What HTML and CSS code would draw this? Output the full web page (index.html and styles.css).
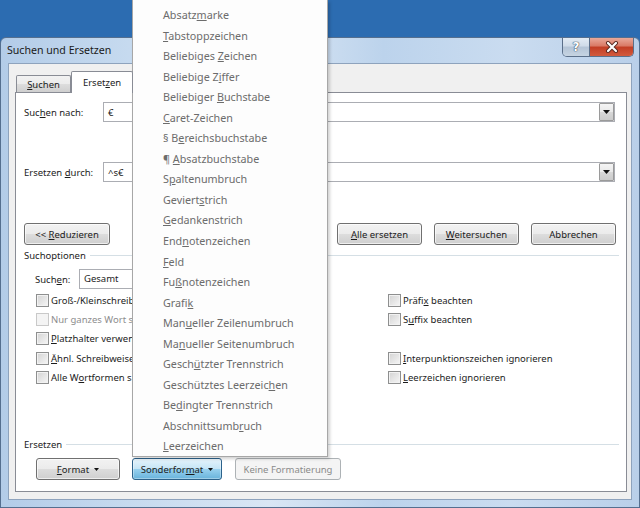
FILE: index.html
```html
<!DOCTYPE html>
<html lang="de">
<head>
<meta charset="utf-8">
<title>Suchen und Ersetzen</title>
<link rel="stylesheet" href="styles.css">
</head>
<body>
<div class="screen">
  <div class="window">
    <div class="titlebar">
      <span class="title">Suchen und Ersetzen</span>
      <div class="caption-buttons">
        <div class="cap-help"><span class="help-glyph">?</span></div>
        <div class="cap-close">
          <svg width="14" height="12" viewBox="0 0 14 12">
            <path d="M3 2 L11 10 M11 2 L3 10" stroke="#5a2a22" stroke-width="4" stroke-linecap="round"/>
            <path d="M3 2 L11 10 M11 2 L3 10" stroke="#ffffff" stroke-width="2.2" stroke-linecap="round"/>
          </svg>
        </div>
      </div>
    </div>
    <div class="client">
      <div class="tabs">
        <div class="tab"><u>S</u>uchen</div>
        <div class="tab active">Erset<u>z</u>en</div>
      </div>
      <div class="panel">
        <div class="field-row">
          <span class="field-label">Suc<u>h</u>en nach:</span>
          <div class="combo">
            <span class="combo-text">€</span>
            <span class="combo-btn"><svg width="7" height="4" viewBox="0 0 7 4"><path d="M0 0 H7 L3.5 4 Z" fill="#111"/></svg></span>
          </div>
        </div>
        <div class="field-row second">
          <span class="field-label">Ersetzen <u>d</u>urch:</span>
          <div class="combo">
            <span class="combo-text">^s€</span>
            <span class="combo-btn"><svg width="7" height="4" viewBox="0 0 7 4"><path d="M0 0 H7 L3.5 4 Z" fill="#111"/></svg></span>
          </div>
        </div>
        <div class="button-row">
          <button class="btn btn-reduce"><span class="lbl">&lt;&lt; <u>R</u>eduzieren</span></button>
          <div class="action-buttons">
            <button class="btn btn-action"><span class="lbl"><u>A</u>lle ersetzen</span></button>
            <button class="btn btn-action"><span class="lbl"><u>W</u>eitersuchen</span></button>
            <button class="btn btn-action"><span class="lbl">Abbrechen</span></button>
          </div>
        </div>
        <div class="group-head options-head"><span>Suchoptionen</span></div>
        <div class="search-dir">
          <span class="dir-label">Such<u>e</u>n:</span>
          <div class="select">Gesamt</div>
        </div>
        <div class="options">
          <div class="check"><span class="box"></span><span>Groß-/Kleinschreib</span></div>
          <div class="check disabled"><span class="box"></span><span>Nur ganzes Wort s</span></div>
          <div class="check"><span class="box"></span><span><u>P</u>latzhalter verwen</span></div>
          <div class="check"><span class="box"></span><span><u>Ä</u>hnl. Schreibweise</span></div>
          <div class="check"><span class="box"></span><span>Alle W<u>o</u>rtformen s</span></div>
          <div class="check"><span class="box"></span><span>Präfi<u>x</u> beachten</span></div>
          <div class="check"><span class="box"></span><span>S<u>u</u>ffix beachten</span></div>
          <div class="check-spacer"></div>
          <div class="check"><span class="box"></span><span><u>I</u>nterpunktionszeichen ignorieren</span></div>
          <div class="check"><span class="box"></span><span><u>L</u>eerzeichen ignorieren</span></div>
        </div>
        <div class="replace-section">
          <div class="group-head"><span>Ersetzen</span></div>
          <div class="bottom-buttons">
            <button class="btn btn-format"><span class="lbl"><u>F</u>ormat</span><svg class="caret" width="5" height="3" viewBox="0 0 5 3"><path d="M0 0 H5 L2.5 3 Z" fill="#111"/></svg></button>
            <button class="btn btn-special"><span class="lbl">Sonderfor<u>m</u>at</span><svg class="caret" width="5" height="3" viewBox="0 0 5 3"><path d="M0 0 H5 L2.5 3 Z" fill="#111"/></svg></button>
            <button class="btn btn-disabled"><span class="lbl">Keine Formatierung</span></button>
          </div>
        </div>
      </div>
    </div>
  </div>
  <div class="menu">
    <div class="menu-item">Absatz<u>m</u>arke</div>
    <div class="menu-item"><u>T</u>abstoppzeichen</div>
    <div class="menu-item">Beliebiges <u>Z</u>eichen</div>
    <div class="menu-item">Beliebige Z<u>i</u>ffer</div>
    <div class="menu-item">Beliebiger <u>B</u>uchstabe</div>
    <div class="menu-item"><u>C</u>aret-Zeichen</div>
    <div class="menu-item">§ B<u>e</u>reichsbuchstabe</div>
    <div class="menu-item">¶ <u>A</u>bsatzbuchstabe</div>
    <div class="menu-item">S<u>p</u>altenumbruch</div>
    <div class="menu-item">Geviert<u>s</u>trich</div>
    <div class="menu-item"><u>G</u>edankenstrich</div>
    <div class="menu-item">End<u>n</u>otenzeichen</div>
    <div class="menu-item"><u>F</u>eld</div>
    <div class="menu-item">Fu<u>ß</u>notenzeichen</div>
    <div class="menu-item">Grafi<u>k</u></div>
    <div class="menu-item">Man<u>u</u>eller Zeilenumbruch</div>
    <div class="menu-item">Ma<u>n</u>ueller Seitenumbruch</div>
    <div class="menu-item">Gesch<u>ü</u>tzter Trennstrich</div>
    <div class="menu-item">Geschütztes Leerzeic<u>h</u>en</div>
    <div class="menu-item">Be<u>d</u>ingter Trennstrich</div>
    <div class="menu-item">Abschnittsumb<u>r</u>uch</div>
    <div class="menu-item"><u>L</u>eerzeichen</div>
  </div>
</div>
</body>
</html>
```

FILE: styles.css
```css
* { box-sizing: border-box; }

html, body {
  margin: 0;
  padding: 0;
}

body {
  width: 640px;
  height: 508px;
  overflow: hidden;
  background: #2c6cb1;
  font-family: "Segoe UI", "Noto Sans", sans-serif;
  font-size: 9.5px;
  color: #1c1c1c;
}

.screen {
  position: relative;
  width: 640px;
  height: 508px;
  padding-top: 37px;
}

.window {
  height: 471px;
  border: 1px solid #556f8f;
  border-radius: 6px 6px 0 0;
  background: linear-gradient(90deg, #b3cce8 0%, #c6daef 20%, #d9e6f4 42%, #bcd3ec 60%, #cadcf0 80%, #b9cfe9 100%);
  padding: 0 7px 7px 7px;
  display: flex;
  flex-direction: column;
}

.titlebar {
  height: 25px;
  margin: 0 -2px 0 -7px;
  padding-left: 6px;
  display: flex;
  align-items: flex-start;
  justify-content: space-between;
}

.title {
  font-size: 10.6px;
  line-height: 25px;
  color: #1a1a1a;
}

.caption-buttons {
  display: flex;
  height: 19px;
  border: 1px solid #5b6f89;
  border-top: none;
  border-radius: 0 0 5px 5px;
  overflow: hidden;
}

.cap-help {
  width: 27px;
  height: 18px;
  border-right: 1px solid #5b6f89;
  background: linear-gradient(#e3ebf4 0%, #cfdbe8 45%, #b4c4d6 50%, #c6d4e2 100%);
  display: flex;
  align-items: center;
  justify-content: center;
}

.help-glyph {
  font-family: "DejaVu Sans", sans-serif;
  font-weight: bold;
  font-size: 12px;
  line-height: 1;
  color: #ffffff;
  text-shadow: 0 0 1px #3e4e63, 0 0 1px #3e4e63, 0 0 1px #3e4e63;
}

.cap-close {
  width: 43px;
  height: 18px;
  background: linear-gradient(#e9a99a 0%, #d97864 45%, #c23d24 50%, #d25a3d 100%);
  display: flex;
  align-items: center;
  justify-content: center;
}

.client {
  flex: 1;
  border: 1px solid #8ea3bd;
  background: #f0f0f0;
  padding: 7px 4px 7px 6px;
  display: flex;
  flex-direction: column;
}

.tabs {
  height: 21px;
  display: flex;
  align-items: flex-end;
  padding-left: 1px;
}

.tab {
  width: 55px;
  height: 17px;
  border: 1px solid #898c95;
  border-bottom: none;
  border-radius: 2px 2px 0 0;
  background: linear-gradient(#f2f2f2 0%, #ebebeb 50%, #dddddd 50%, #cfcfcf 100%);
  text-align: center;
  line-height: 17px;
}

.tab.active {
  width: 62px;
  height: 22px;
  margin-bottom: -1px;
  background: #ffffff;
  position: relative;
  z-index: 1;
  line-height: 21px;
}

.panel {
  flex: 1;
  border: 1px solid #898c95;
  background: #ffffff;
  padding: 9px 11px 11px 8px;
  display: flex;
  flex-direction: column;
}

.field-row {
  display: grid;
  grid-template-columns: 79px 1fr;
  align-items: center;
  height: 20px;
}

.field-row.second {
  margin-top: 40px;
}

.combo {
  height: 20px;
  border: 1px solid #abadb3;
  background: #ffffff;
  display: flex;
  align-items: center;
}

.combo-text {
  flex: 1;
  padding-left: 4px;
}

.combo-btn {
  width: 15px;
  height: 18px;
  border: 1px solid #9a9a9a;
  border-radius: 1px;
  background: linear-gradient(#f4f4f4 0%, #e9e9e9 50%, #d8d8d8 50%, #cbcbcb 100%);
  display: flex;
  align-items: center;
  justify-content: center;
}

.btn {
  font: inherit;
  color: #1c1c1c;
  height: 22px;
  padding: 0;
  border: 1px solid #707070;
  border-radius: 3px;
  background: linear-gradient(#f2f2f2 0%, #ebebeb 50%, #dddddd 50%, #cfcfcf 100%);
  box-shadow: inset 0 0 0 1px rgba(255, 255, 255, 0.65);
  display: flex;
  align-items: center;
  justify-content: center;
  gap: 5px;
}

.lbl {
  white-space: nowrap;
}

.button-row {
  margin-top: 41px;
  height: 22px;
  display: flex;
  justify-content: space-between;
}

.btn-reduce { width: 86px; }

.action-buttons {
  display: flex;
  gap: 12px;
  margin-right: -1px;
}

.btn-action { width: 85px; }

.group-head {
  height: 14px;
  display: flex;
  align-items: center;
  margin-right: -4px;
}

.group-head::after {
  content: "";
  flex: 1;
  height: 0;
  border-top: 1px solid #d5dfe5;
  margin-left: 4px;
}

.options-head {
  margin-top: 3px;
}

.search-dir {
  margin-top: 7px;
  height: 20px;
  padding-left: 11px;
  display: flex;
  align-items: center;
}

.dir-label { width: 44px; }

.select {
  width: 130px;
  height: 20px;
  border: 1px solid #abadb3;
  background: #ffffff;
  padding-left: 4px;
  line-height: 18px;
}

.options {
  margin-top: 1.5px;
  padding-left: 12px;
  display: grid;
  grid-template-columns: 352px 1fr;
  grid-template-rows: repeat(5, 19.3px);
  grid-auto-flow: column;
}

.check {
  display: flex;
  align-items: center;
  gap: 2px;
  white-space: nowrap;
}

.box {
  width: 13px;
  height: 13px;
  flex: none;
  border: 1px solid #8e8f8f;
  background: linear-gradient(135deg, #d3d3d3 0%, #f6f6f6 100%);
  box-shadow: inset 0 0 0 1px #f2f2f2;
}

.check.disabled { color: #8d8d8d; }

.check.disabled .box {
  border-color: #c9c9c9;
  background: #f4f4f4;
  box-shadow: none;
}

.replace-section {
  margin-top: auto;
}

.bottom-buttons {
  margin-top: 7px;
  height: 22px;
  padding-left: 12px;
  display: flex;
}

.btn-format { width: 84px; }

.btn-special {
  width: 90px;
  margin-left: 12px;
  border-color: #2c628b;
  background: linear-gradient(#e5f4fc 0%, #c4e5f6 50%, #98d1ef 50%, #68b3db 100%);
  box-shadow: inset 0 0 0 1px rgba(255, 255, 255, 0.35);
}

.btn-disabled {
  width: 106px;
  margin-left: 13px;
  color: #8a8a8a;
  border-color: #adb2b5;
  background: #f4f4f4;
  box-shadow: none;
}

.caret { display: block; }

.menu {
  position: absolute;
  left: 132px;
  top: 0;
  width: 196px;
  height: 457px;
  overflow: hidden;
  border: 1px solid #a7a7a7;
  border-top: none;
  background: #fdfdfd;
  padding-top: 5px;
  box-shadow: 2px 2px 3px rgba(0, 0, 0, 0.18);
  font-size: 10.75px;
  color: #6c6c6c;
}

.menu-item {
  height: 20.55px;
  line-height: 20.55px;
  padding-left: 30px;
  white-space: nowrap;
}
```
